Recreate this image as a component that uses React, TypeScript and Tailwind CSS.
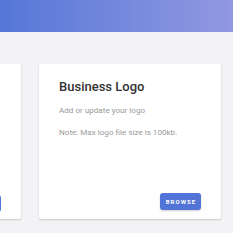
export default function App() {
  return (
    <div className="w-[233px] h-[233px] overflow-hidden bg-[#f3f3f5] font-['Roboto',sans-serif]">
      <div className="h-[32px] bg-gradient-to-r from-[#5677d8] via-[#7388dc] to-[#9298e1]" />
      <div className="flex gap-[18px] pt-[32px] -ml-[160px]">
        <div className="relative w-[181px] h-[155px] shrink-0 bg-white shadow-[0_1px_2px_rgba(0,0,0,0.18)] rounded-[2px]">
          <div className="absolute right-[20px] top-[131px] w-[41px] h-[17px] bg-[#5174d6] rounded-[3px]" />
        </div>
        <div className="flex flex-col w-[182px] h-[155px] shrink-0 bg-white shadow-[0_1px_2px_rgba(0,0,0,0.18)] rounded-[2px] px-[20px] pt-[15px] pb-[9px]">
          <h2 className="text-[13px] font-medium text-[#333] leading-[16px]">Business Logo</h2>
          <p className="mt-[10px] text-[8.1px] text-[#999] leading-[10px]">Add or update your logo</p>
          <p className="mt-[12px] text-[8.1px] text-[#999] leading-[10px]">Note: Max logo file size is 100kb.</p>
          <div className="mt-auto flex justify-end">
            <button className="w-[41px] h-[17px] bg-[#5174d6] rounded-[3px] text-white text-[6px] font-bold tracking-[0.18em] pl-[1px] shadow-[0_1px_2px_rgba(0,0,0,0.2)]">
              BROWSE
            </button>
          </div>
        </div>
      </div>
    </div>
  );
}
